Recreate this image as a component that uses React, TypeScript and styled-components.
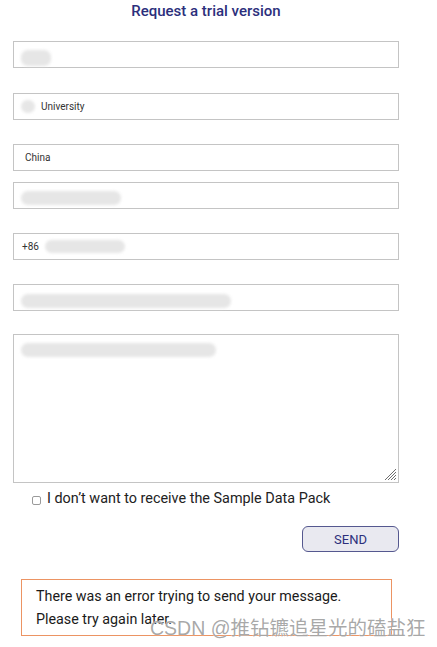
import styled, { createGlobalStyle } from 'styled-components';

const GlobalStyle = createGlobalStyle`
  body {
    margin: 0;
    background: #ffffff;
    font-family: Roboto, "Liberation Sans", sans-serif;
  }
`;

const Page = styled.div`
  position: relative;
  width: 437px;
  height: 647px;
  overflow: hidden;
`;

const Form = styled.form`
  display: flex;
  flex-direction: column;
  width: 386px;
  margin-left: 13px;
`;

const Title = styled.h2`
  margin: 1px 0 0;
  font-size: 15px;
  line-height: 21px;
  font-weight: 500;
  color: #2c2f7c;
  text-align: center;
`;

const Field = styled.div<{ $gap: number }>`
  display: flex;
  align-items: center;
  gap: 6px;
  box-sizing: border-box;
  height: 27px;
  margin-top: ${p => p.$gap}px;
  padding: 0 10px 0 7px;
  border: 1px solid #c4c4c4;
  font-size: 10px;
  color: #333;
  background: #fff;
`;

const Smudge = styled.span<{ $w: number; $h?: number; $dy?: number }>`
  display: inline-block;
  width: ${p => p.$w}px;
  height: ${p => p.$h ?? 14}px;
  margin-top: ${p => p.$dy ?? 0}px;
  border-radius: 7px;
  background: #e6e6e6;
  filter: blur(1.5px);
`;

const MessageBox = styled.div`
  position: relative;
  box-sizing: border-box;
  height: 149px;
  margin-top: 23px;
  padding: 7px 7px;
  border: 1px solid #c4c4c4;
`;

const Grip = styled.svg`
  position: absolute;
  right: 1px;
  bottom: 1px;
`;

const CheckRow = styled.label`
  display: flex;
  align-items: center;
  gap: 6px;
  margin: 6px 0 0 19px;
  font-size: 14.4px;
  line-height: 20px;
  color: #222;
`;

const Box = styled.span`
  display: inline-block;
  width: 7px;
  height: 7px;
  margin-top: 2px;
  border: 1px solid #9a9a9a;
  border-radius: 2px;
`;

const Actions = styled.div`
  display: flex;
  justify-content: flex-end;
  margin-top: 17px;
`;

const SendButton = styled.button`
  box-sizing: border-box;
  width: 97px;
  height: 26px;
  border: 1px solid #55588f;
  border-radius: 6px;
  background: #e9e9f0;
  color: #2c2f7c;
  font-family: Roboto, "Liberation Sans", sans-serif;
  font-size: 13px;
  padding: 0;
`;

const ErrorBox = styled.div`
  box-sizing: border-box;
  width: 371px;
  height: 57px;
  margin: 27px 0 0 8px;
  padding: 5px 14px 0;
  border: 1px solid #ec9463;
  font-size: 14.3px;
  line-height: 23px;
  color: #1a1a1a;
`;

const Watermark = styled.div`
  position: absolute;
  left: 150px;
  top: 615px;
  font-family: "Liberation Sans", "Noto Sans CJK SC", sans-serif;
  font-size: 19.5px;
  line-height: 26px;
  color: rgba(140, 140, 140, 0.75);
  text-shadow: 0 0 1px #fff;
  white-space: nowrap;
`;

export default function App() {
  return (
    <Page>
      <GlobalStyle />
      <Form>
        <Title>Request a trial version</Title>
        <Field $gap={19}>
          <Smudge $w={30} $h={16} $dy={6} />
        </Field>
        <Field $gap={25}>
          <Smudge $w={14} $h={13} />
          <span>University</span>
        </Field>
        <Field $gap={24} style={{ paddingLeft: 11 }}>
          <span>China</span>
        </Field>
        <Field $gap={11}>
          <Smudge $w={100} $h={14} $dy={4} />
        </Field>
        <Field $gap={24} style={{ paddingLeft: 8 }}>
          <span>+86</span>
          <Smudge $w={80} $h={13} />
        </Field>
        <Field $gap={24}>
          <Smudge $w={210} $h={14} $dy={6} />
        </Field>
        <MessageBox>
          <Smudge $w={195} $h={14} />
          <Grip width="14" height="14" viewBox="0 0 14 14">
            <g stroke="#6f6f6f" strokeWidth="1">
              <line x1="13" y1="2" x2="2" y2="13" />
              <line x1="13" y1="5" x2="5" y2="13" />
              <line x1="13" y1="8" x2="8" y2="13" />
              <line x1="13" y1="11" x2="11" y2="13" />
            </g>
          </Grip>
        </MessageBox>
        <CheckRow>
          <Box />
          I don’t want to receive the Sample Data Pack
        </CheckRow>
        <Actions>
          <SendButton type="button">SEND</SendButton>
        </Actions>
        <ErrorBox>
          There was an error trying to send your message.
          <br />
          Please try again later.
        </ErrorBox>
      </Form>
      <Watermark>CSDN @推钻镳追星光的磕盐狂</Watermark>
    </Page>
  );
}
